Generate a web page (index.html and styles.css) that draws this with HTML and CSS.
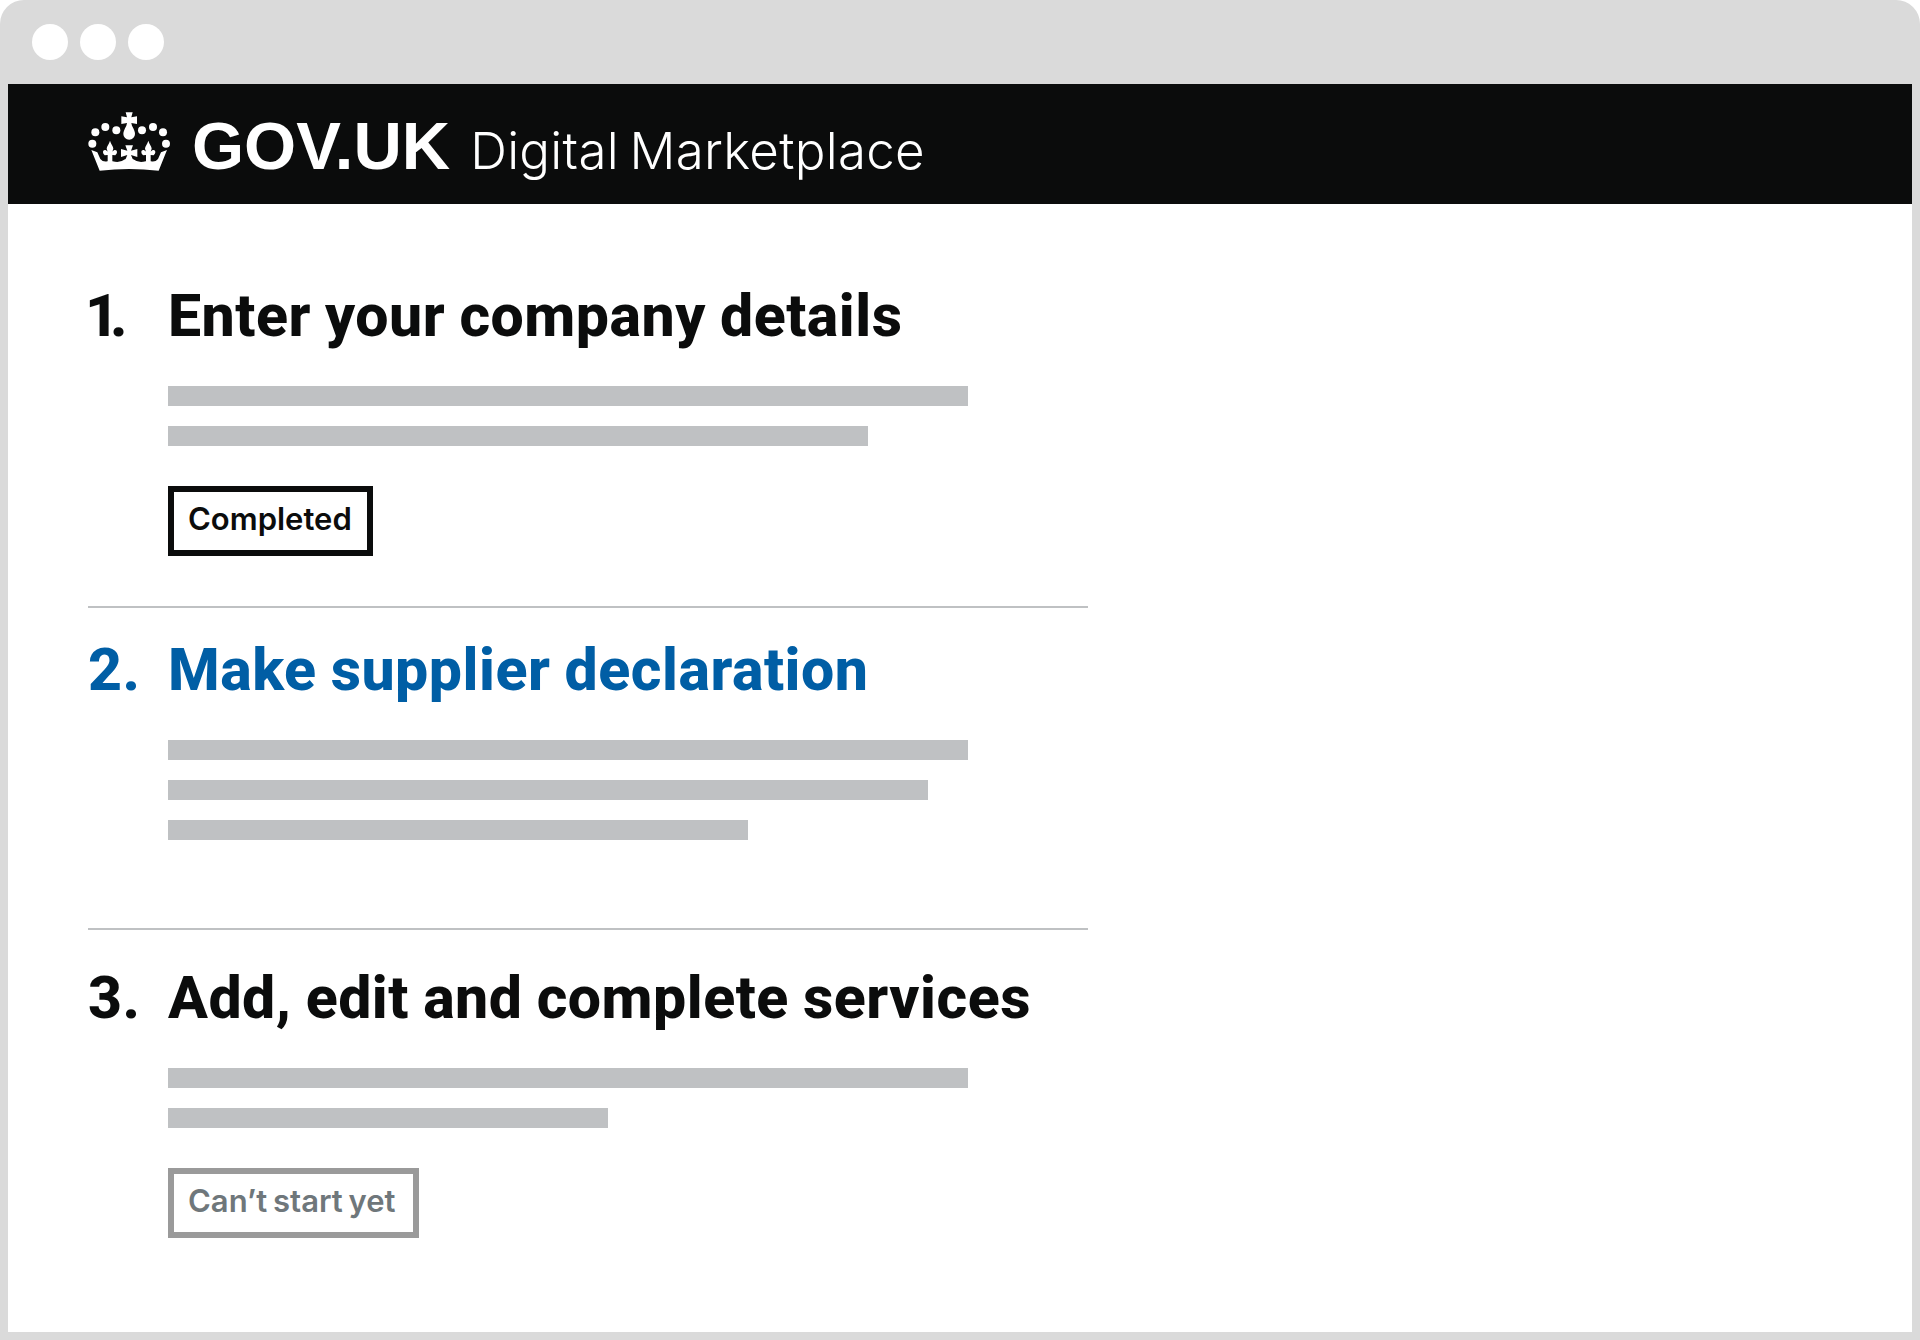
FILE: index.html
```html
<!DOCTYPE html>
<html lang="en">
<head>
<meta charset="utf-8">
<title>Digital Marketplace</title>
<link rel="stylesheet" href="styles.css">
</head>
<body>
<div class="browser">
  <div class="chrome">
    <span class="dot"></span><span class="dot"></span><span class="dot"></span>
  </div>
  <div class="window">
    <header class="masthead">
      <svg class="crown" viewBox="54 36 246 180" aria-hidden="true">
        <defs>
          <g id="crown-half" fill="#fff">
            <circle cx="67" cy="131" r="12"/><circle cx="76" cy="97" r="12"/><circle cx="106" cy="81" r="12"/><circle cx="139" cy="91" r="12"/>
            <path d="M120 122C123 133 130 138 130 146L127 155C132 148 141 148 141 156C141 161 138 163 136 166L127 165V186H113V165L104 166C102 163 99 161 99 156C99 148 108 148 113 155L110 146C110 138 117 133 120 122Z"/>
          </g>
        </defs>
        <use href="#crown-half"/>
        <use href="#crown-half" transform="matrix(-1 0 0 1 355 0)"/>
        <g fill="#fff">
          <path d="M167 37H188L184 52L201 49V72L184 69L186 77C192 88 195 95 195 102A17.500 17.500 0 0 1 160 102C160 95 163 88 169 77L171 69L154 72V49L171 52Z"/>
          <path d="M64 150L82 157L91 177Q99 187 112 184H128Q150 190 165 178H190Q205 190 227 184H243Q256 187 264 177L273 157L291 150L266 212Q177 202 89 212Z"/>
          <path d="M166 136H189L183 152L202 147V171L183 165L191 184H164L172 165L153 171V147L172 152Z"/>
        </g>
      </svg>
      <span class="wordmark">GOV.UK</span>
      <span class="service">Digital Marketplace</span>
    </header>
    <main class="tasks">
      <section class="task task-first">
        <h2 class="task-title"><span class="task-num task-num-one">1.</span>Enter your company details</h2>
        <div class="line line-800"></div>
        <div class="line line-700"></div>
        <div class="tag">Completed</div>
      </section>
      <section class="task task-second">
        <h2 class="task-title task-title-link"><span class="task-num">2.</span>Make supplier declaration</h2>
        <div class="line line-800"></div>
        <div class="line line-760"></div>
        <div class="line line-580"></div>
      </section>
      <section class="task task-third">
        <h2 class="task-title"><span class="task-num">3.</span>Add, edit and complete services</h2>
        <div class="line line-800"></div>
        <div class="line line-440"></div>
        <div class="tag tag-muted">Can’t start yet</div>
      </section>
    </main>
  </div>
</div>
</body>
</html>
```
FILE: styles.css
```css
* { box-sizing: border-box; }
html, body { margin: 0; padding: 0; background: #fff; }
.browser {
  width: 1920px;
  height: 1340px;
  overflow: hidden;
  background: #dadada;
  border-radius: 24px 24px 0 0;
  padding: 0 8px 8px;
  display: flex;
  flex-direction: column;
}
.chrome {
  height: 84px;
  flex: none;
  padding: 24px 0 0 24px;
  display: flex;
  align-items: flex-start;
  gap: 12px;
}
.dot { width: 36px; height: 36px; border-radius: 50%; background: #fff; }
.window { flex: 1; background: #fff; }
.masthead {
  height: 120px;
  background: #0b0c0c;
  color: #fff;
  padding: 29px 0 0 80px;
  display: flex;
  align-items: baseline;
}
.crown { width: 82px; height: 60px; margin-top: -1px; flex: none; align-self: flex-start; }
.wordmark {
  font: 700 67px/66px "Liberation Sans", Arial, sans-serif;
  margin-left: 22px;
}
.service {
  font: 300 51px/66px Inter, sans-serif;
  word-spacing: -4px;
  letter-spacing: 0.3px;
  margin-left: 20px;
}
.tasks { padding-left: 80px; }
.task { width: 1000px; }
.task + .task { border-top: 2px solid #bfc1c3; }
.task-first { padding: 77px 0 50px; }
.task-second { padding: 27px 0 68px; }
.task-third { padding: 33px 0 0; }
.task-title {
  margin: 0 0 35px;
  font: 800 59px/70px Roboto, sans-serif;
  word-spacing: -1px;
  letter-spacing: 0.5px;
  color: #0b0c0c;
  display: flex;
}
.task-title-link { color: #005ea5; }
.task-num { width: 80px; flex: none; }
.task-num-one { letter-spacing: -9px; margin-left: -3px; width: 83px; }
.line { height: 20px; margin: 0 0 20px 80px; background: #bfc1c3; }
.line-800 { width: 800px; }
.line-760 { width: 760px; }
.line-700 { width: 700px; }
.line-580 { width: 580px; }
.line-440 { width: 440px; }
.tag {
  display: inline-block;
  margin: 20px 0 0 80px;
  height: 70px;
  padding: 0 15px 0 14px;
  border: 6px solid #0b0c0c;
  color: #0b0c0c;
  font: 600 31px/54px Inter, sans-serif;
  word-spacing: -2px;
}
.tag-muted { border-color: #9a9a9a; color: #6f777b; padding-right: 17px; }
```
